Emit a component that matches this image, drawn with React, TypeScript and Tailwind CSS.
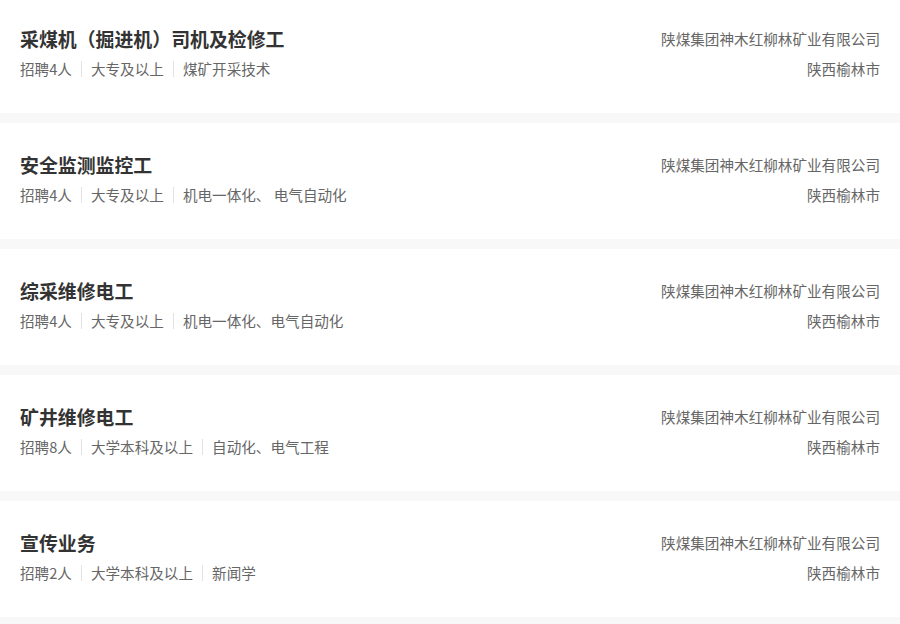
import React from 'react';

type Job = {
  title: string;
  tags: string[];
  company: string;
  city: string;
};

const jobs: Job[] = [
  { title: '采煤机（掘进机）司机及检修工', tags: ['招聘4人', '大专及以上', '煤矿开采技术'], company: '陕煤集团神木红柳林矿业有限公司', city: '陕西榆林市' },
  { title: '安全监测监控工', tags: ['招聘4人', '大专及以上', '机电一体化、 电气自动化'], company: '陕煤集团神木红柳林矿业有限公司', city: '陕西榆林市' },
  { title: '综采维修电工', tags: ['招聘4人', '大专及以上', '机电一体化、电气自动化'], company: '陕煤集团神木红柳林矿业有限公司', city: '陕西榆林市' },
  { title: '矿井维修电工', tags: ['招聘8人', '大学本科及以上', '自动化、电气工程'], company: '陕煤集团神木红柳林矿业有限公司', city: '陕西榆林市' },
  { title: '宣传业务', tags: ['招聘2人', '大学本科及以上', '新闻学'], company: '陕煤集团神木红柳林矿业有限公司', city: '陕西榆林市' },
];

export default function App() {
  return (
    <div
      className="w-[900px] h-[624px] overflow-hidden bg-[#f8f8f8]"
      style={{ fontFamily: '"Microsoft YaHei", "Noto Sans CJK SC", "Noto Sans", sans-serif' }}
    >
      <div className="-mt-[3px] flex flex-col gap-[10px]">
        {jobs.map((job, i) => (
          <div key={i} className="bg-white h-[116px] px-[20px] pt-[29px] flex justify-between">
            <div className="flex flex-col">
              <h3 className="text-[18.9px] leading-[26px] font-bold text-[#333]">{job.title}</h3>
              <div className="mt-[7px] flex items-center text-[14.6px] leading-[20px] text-[#666]">
                {job.tags.map((t, j) => (
                  <span
                    key={j}
                    className={j === 0 ? 'pr-[9px]' : 'px-[9px] border-l border-[#e2e2e2] leading-[16px]'}
                  >
                    {t}
                  </span>
                ))}
              </div>
            </div>
            <div className="flex flex-col items-end text-[14.6px] text-[#666]">
              <div className="leading-[26px]">{job.company}</div>
              <div className="mt-[7px] leading-[20px]">{job.city}</div>
            </div>
          </div>
        ))}
      </div>
    </div>
  );
}
